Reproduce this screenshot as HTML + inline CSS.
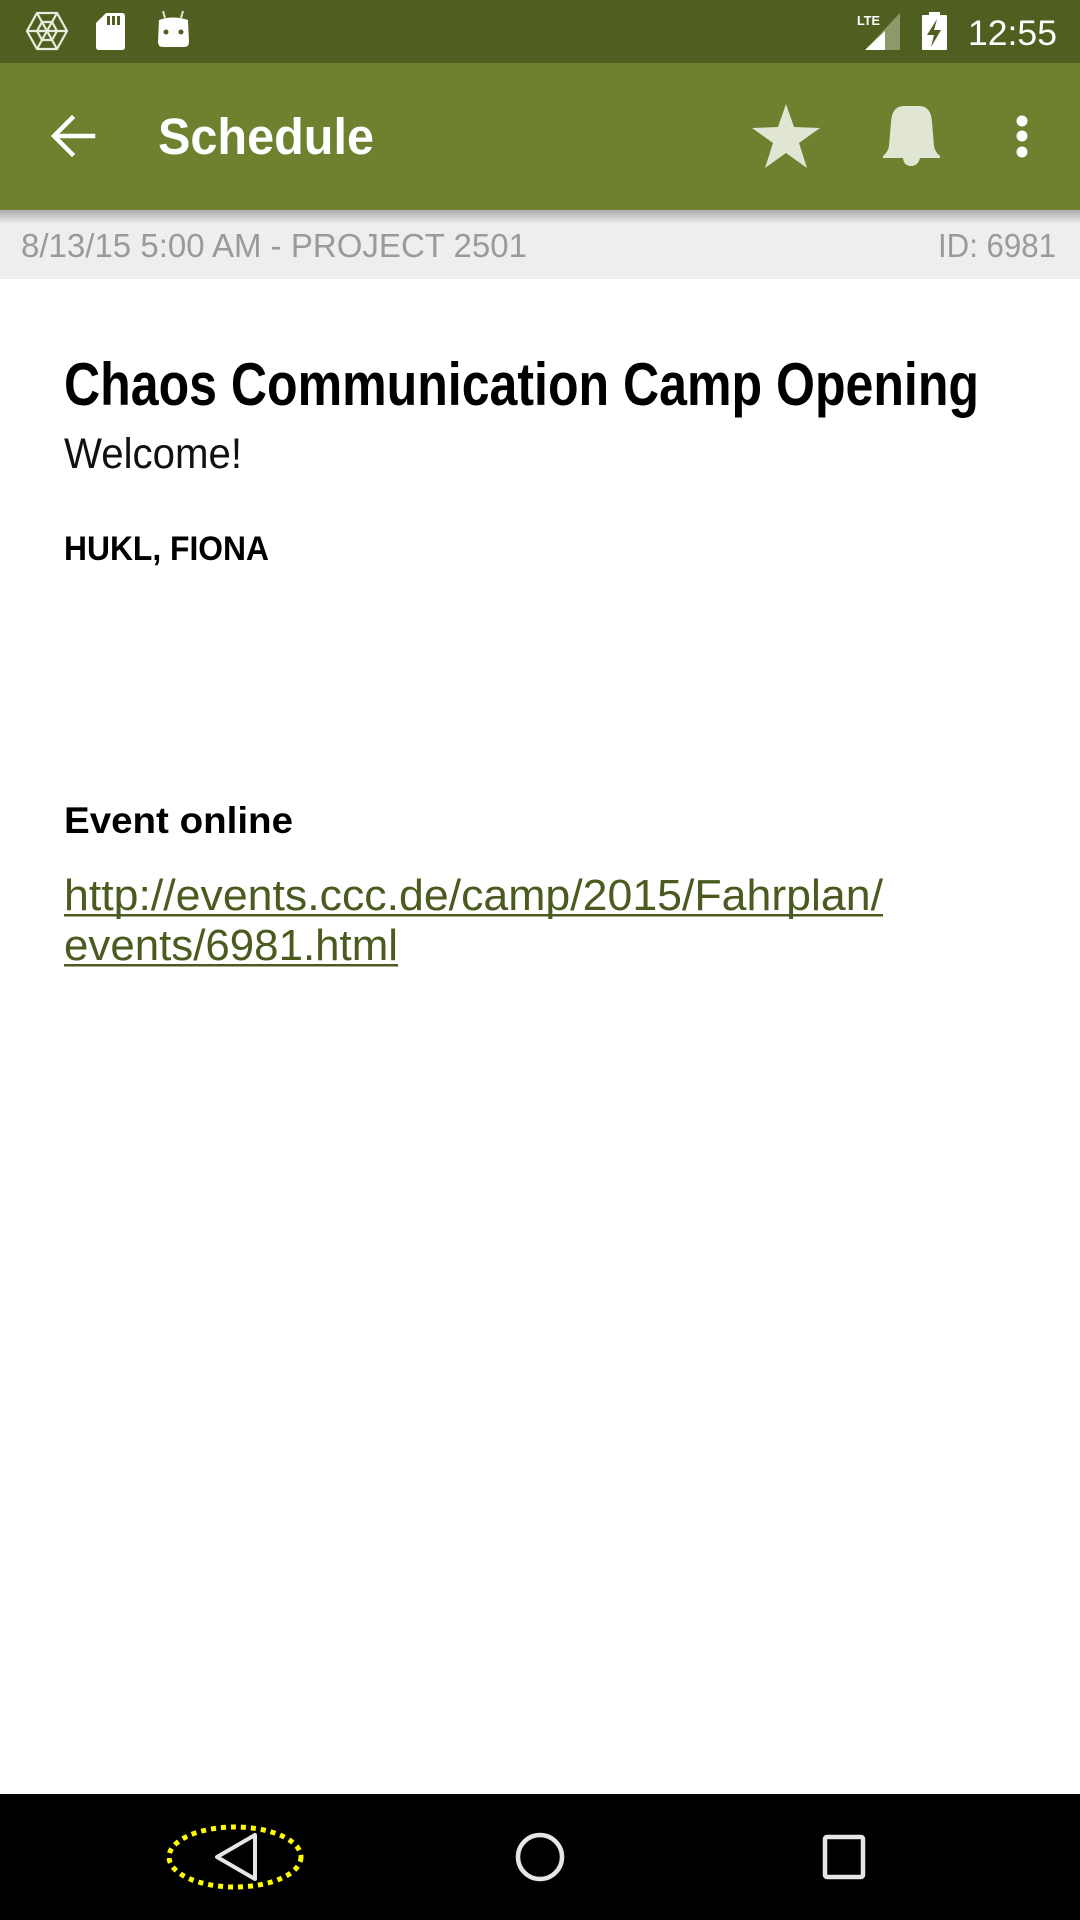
<!DOCTYPE html>
<html><head><meta charset="utf-8"><style>
html,body{margin:0;padding:0;width:1080px;height:1920px;overflow:hidden;background:#fff}
svg{display:block}
</style></head><body>
<svg width="1080" height="1920" viewBox="0 0 1080 1920" xmlns="http://www.w3.org/2000/svg" font-family="'Liberation Sans', sans-serif">
<defs>
<linearGradient id="sh" x1="0" y1="0" x2="0" y2="1"><stop offset="0" stop-color="#000" stop-opacity="0.28"/><stop offset="1" stop-color="#000" stop-opacity="0"/></linearGradient>
</defs>
<rect width="1080" height="1920" fill="#fff"/>
<!-- status bar -->
<rect x="0" y="0" width="1080" height="63" fill="#4f5f20"/>
<!-- web icon -->
<g stroke="#e8ecdc" stroke-width="2.2" fill="none">
<polygon points="37,13 57,13 67,31 57,49 37,49 27,31"/>
<line x1="37" y1="13" x2="57" y2="49"/><line x1="57" y1="13" x2="37" y2="49"/><line x1="27" y1="31" x2="67" y2="31"/>
<polygon points="42,22 52,22 57,31 52,40 42,40 37,31"/>
</g>
<!-- sd card -->
<path d="M106 13 H122 Q125 13 125 16 V47 Q125 50 122 50 H99 Q96 50 96 47 V23 Z" fill="#fff"/>
<rect x="107" y="16" width="3" height="9" fill="#4f5f20"/><rect x="112" y="16" width="3" height="9" fill="#4f5f20"/><rect x="117" y="16" width="3" height="9" fill="#4f5f20"/>
<!-- android -->
<line x1="165" y1="18" x2="163" y2="11" stroke="#dfe4d0" stroke-width="2"/><line x1="181" y1="18" x2="183" y2="11" stroke="#dfe4d0" stroke-width="2"/>
<path d="M159 20 Q173 15 188 20 L189 42 Q189 47 184 47 H163 Q158 47 158 42 Z" fill="#fff"/>
<circle cx="166" cy="32" r="2.5" fill="#4f5f20"/><circle cx="181" cy="32" r="2.5" fill="#4f5f20"/>
<!-- signal -->
<polygon points="900,13 900,50 865,50" fill="#8b9a68"/>
<polygon points="885,31 885,50 865,50" fill="#fff"/>
<text x="857" y="25" font-size="13" font-weight="bold" fill="#fff" textLength="23" lengthAdjust="spacingAndGlyphs">LTE</text>
<!-- battery -->
<rect x="929" y="12" width="11" height="4" fill="#fff"/>
<rect x="922" y="15" width="25" height="35" rx="1" fill="#fff"/>
<polygon points="937,19 927,35 934,35 931,47 941,30 934,30" fill="#4f5f20"/>
<text x="968" y="45" font-size="35" fill="#fff" textLength="89" lengthAdjust="spacingAndGlyphs">12:55</text>
<!-- toolbar -->
<rect x="0" y="63" width="1080" height="147" fill="#6d812e"/>
<rect x="0" y="210" width="1080" height="69" fill="#eeeeee"/>
<rect x="0" y="210" width="1080" height="14" fill="url(#sh)"/>
<g stroke="#fff" stroke-width="4.5" fill="none" stroke-linecap="square">
<line x1="56" y1="136" x2="93" y2="136"/><polyline points="72,118 54,136 72,154"/>
</g>
<text x="158" y="154" font-size="51" font-weight="bold" fill="#fff" textLength="216" lengthAdjust="spacingAndGlyphs">Schedule</text>
<polygon points="786,104 794,127 820,128 799,143 807,168 786,153 765,168 773,143 752,128 778,127" fill="#e1e6d4"/>
<path d="M904 106 Q892 106 891 122 L889 146 Q888 152 883 156 V158 H940 V156 Q935 152 934 146 L932 122 Q931 106 919 106 Z M903 158 Q904 166 911 166 Q918 166 920 158 Z" fill="#e1e6d4"/>
<circle cx="1022" cy="121" r="5.5" fill="#fff"/><circle cx="1022" cy="136" r="5.5" fill="#fff"/><circle cx="1022" cy="152" r="5.5" fill="#fff"/>
<!-- subheader -->
<text x="21" y="257" font-size="33" fill="#9a9a9a" textLength="506" lengthAdjust="spacingAndGlyphs">8/13/15 5:00 AM - PROJECT 2501</text>
<text x="938" y="257" font-size="33" fill="#9a9a9a" textLength="118" lengthAdjust="spacingAndGlyphs">ID: 6981</text>
<!-- content -->
<text x="64" y="405" font-size="60" font-weight="bold" fill="#000" textLength="915" lengthAdjust="spacingAndGlyphs">Chaos Communication Camp Opening</text>
<text x="64" y="468" font-size="43" fill="#111" textLength="178" lengthAdjust="spacingAndGlyphs">Welcome!</text>
<text x="64" y="560" font-size="34" font-weight="bold" fill="#000" textLength="205" lengthAdjust="spacingAndGlyphs">HUKL, FIONA</text>
<text x="64" y="833" font-size="37" font-weight="bold" fill="#000" textLength="229" lengthAdjust="spacingAndGlyphs">Event online</text>
<text x="64" y="910" font-size="44" fill="#4b5a1e" textLength="819" lengthAdjust="spacingAndGlyphs">http://events.ccc.de/camp/2015/Fahrplan/</text>
<rect x="64" y="914" width="819" height="2.5" fill="#4b5a1e"/>
<text x="64" y="960" font-size="44" fill="#4b5a1e" textLength="334" lengthAdjust="spacingAndGlyphs">events/6981.html</text>
<rect x="64" y="964" width="334" height="2.5" fill="#4b5a1e"/>
<!-- nav bar -->
<rect x="0" y="1794" width="1080" height="126" fill="#000"/>
<ellipse cx="235" cy="1857" rx="66" ry="30" fill="none" stroke="#ffff00" stroke-width="5" stroke-dasharray="5 5"/>
<polygon points="255,1835 255,1879 217,1857" fill="none" stroke="#e6e6e6" stroke-width="4" stroke-linejoin="round"/>
<circle cx="540" cy="1857" r="22" fill="none" stroke="#e6e6e6" stroke-width="4.5"/>
<rect x="825" y="1837" width="38" height="40" rx="2" fill="none" stroke="#e6e6e6" stroke-width="4.5"/>
</svg>
</body></html>
